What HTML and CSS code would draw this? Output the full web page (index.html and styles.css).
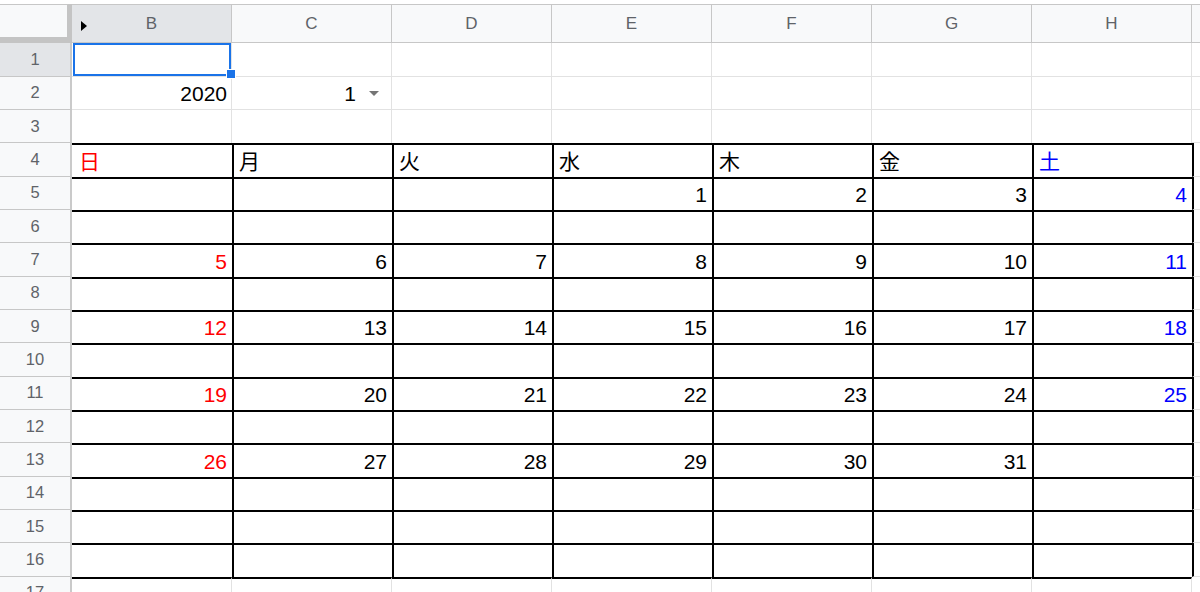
FILE: index.html
```html
<!DOCTYPE html>
<html lang="ja">
<head>
<meta charset="utf-8">
<title>Calendar</title>
<link rel="stylesheet" href="styles.css">
</head>
<body>
<div class="sheet">
  <!-- header -->
  <div class="corner"></div>
  <div class="ch on"><span class="tri"></span>B</div>
  <div class="ch">C</div>
  <div class="ch">D</div>
  <div class="ch">E</div>
  <div class="ch">F</div>
  <div class="ch">G</div>
  <div class="ch">H</div>
  <div class="ch"></div>

  <!-- row 1 -->
  <div class="rh on">1</div>
  <div class="c selcell"><span class="handle"></span></div>
  <div class="c"></div><div class="c"></div><div class="c"></div><div class="c"></div><div class="c"></div><div class="c"></div><div class="c"></div>

  <!-- row 2 -->
  <div class="rh">2</div>
  <div class="c r">2020</div>
  <div class="c r dd"><span>1</span><span class="arrow"></span></div>
  <div class="c"></div><div class="c"></div><div class="c"></div><div class="c"></div><div class="c"></div><div class="c"></div>

  <!-- row 3 -->
  <div class="rh">3</div>
  <div class="c e"></div><div class="c e"></div><div class="c e"></div><div class="c e"></div><div class="c e"></div><div class="c e"></div><div class="c e"></div>
  <div class="c"></div>

  <!-- row 4 -->
  <div class="rh">4</div>
  <div class="c k sun">日</div>
  <div class="c k kl">月</div>
  <div class="c k kl">火</div>
  <div class="c k kl">水</div>
  <div class="c k kl">木</div>
  <div class="c k kl">金</div>
  <div class="c k kl sat">土</div>
  <div class="c il"></div>

  <!-- row 5 -->
  <div class="rh">5</div>
  <div class="c k r"></div>
  <div class="c k kl r"></div>
  <div class="c k kl r"></div>
  <div class="c k kl r">1</div>
  <div class="c k kl r">2</div>
  <div class="c k kl r">3</div>
  <div class="c k kl r sat">4</div>
  <div class="c il"></div>

  <!-- row 6 -->
  <div class="rh">6</div>
  <div class="c k"></div><div class="c k kl"></div><div class="c k kl"></div><div class="c k kl"></div><div class="c k kl"></div><div class="c k kl"></div><div class="c k kl"></div>
  <div class="c il"></div>

  <!-- row 7 -->
  <div class="rh">7</div>
  <div class="c k r sun">5</div>
  <div class="c k kl r">6</div>
  <div class="c k kl r">7</div>
  <div class="c k kl r">8</div>
  <div class="c k kl r">9</div>
  <div class="c k kl r">10</div>
  <div class="c k kl r sat">11</div>
  <div class="c il"></div>

  <!-- row 8 -->
  <div class="rh">8</div>
  <div class="c k"></div><div class="c k kl"></div><div class="c k kl"></div><div class="c k kl"></div><div class="c k kl"></div><div class="c k kl"></div><div class="c k kl"></div>
  <div class="c il"></div>

  <!-- row 9 -->
  <div class="rh">9</div>
  <div class="c k r sun">12</div>
  <div class="c k kl r">13</div>
  <div class="c k kl r">14</div>
  <div class="c k kl r">15</div>
  <div class="c k kl r">16</div>
  <div class="c k kl r">17</div>
  <div class="c k kl r sat">18</div>
  <div class="c il"></div>

  <!-- row 10 -->
  <div class="rh">10</div>
  <div class="c k"></div><div class="c k kl"></div><div class="c k kl"></div><div class="c k kl"></div><div class="c k kl"></div><div class="c k kl"></div><div class="c k kl"></div>
  <div class="c il"></div>

  <!-- row 11 -->
  <div class="rh">11</div>
  <div class="c k r sun">19</div>
  <div class="c k kl r">20</div>
  <div class="c k kl r">21</div>
  <div class="c k kl r">22</div>
  <div class="c k kl r">23</div>
  <div class="c k kl r">24</div>
  <div class="c k kl r sat">25</div>
  <div class="c il"></div>

  <!-- row 12 -->
  <div class="rh">12</div>
  <div class="c k"></div><div class="c k kl"></div><div class="c k kl"></div><div class="c k kl"></div><div class="c k kl"></div><div class="c k kl"></div><div class="c k kl"></div>
  <div class="c il"></div>

  <!-- row 13 -->
  <div class="rh">13</div>
  <div class="c k r sun">26</div>
  <div class="c k kl r">27</div>
  <div class="c k kl r">28</div>
  <div class="c k kl r">29</div>
  <div class="c k kl r">30</div>
  <div class="c k kl r">31</div>
  <div class="c k kl r sat"></div>
  <div class="c il"></div>

  <!-- row 14 -->
  <div class="rh">14</div>
  <div class="c k"></div><div class="c k kl"></div><div class="c k kl"></div><div class="c k kl"></div><div class="c k kl"></div><div class="c k kl"></div><div class="c k kl"></div>
  <div class="c il"></div>

  <!-- row 15 -->
  <div class="rh">15</div>
  <div class="c k"></div><div class="c k kl"></div><div class="c k kl"></div><div class="c k kl"></div><div class="c k kl"></div><div class="c k kl"></div><div class="c k kl"></div>
  <div class="c il"></div>

  <!-- row 16 -->
  <div class="rh">16</div>
  <div class="c k"></div><div class="c k kl"></div><div class="c k kl"></div><div class="c k kl"></div><div class="c k kl"></div><div class="c k kl"></div><div class="c k kl"></div>
  <div class="c il"></div>

  <!-- row 17 -->
  <div class="rh">17</div>
  <div class="c bt"></div><div class="c bt"></div><div class="c bt"></div><div class="c bt"></div><div class="c bt"></div><div class="c bt"></div><div class="c bt"></div>
  <div class="c"></div>
</div>
</body>
</html>
```

FILE: styles.css
```css
* { box-sizing: border-box; }

html, body {
  margin: 0;
  height: 100%;
  overflow: hidden;
  background: #ffffff;
}

.sheet {
  display: grid;
  grid-template-columns: 72px repeat(7, 160px) 1fr;
  grid-template-rows: 39.333px repeat(17, 33.333px);
  padding-top: 4px;
  font-family: "Liberation Sans", "Noto Sans CJK JP", Arial, sans-serif;
  color: #000;
}

.corner {
  background: #f8f9fa;
  border-top: 1px solid #c7c7c7;
  border-right: 5px solid #c4c4c4;
  border-bottom: 6px solid #c4c4c4;
}

.ch {
  background: #f8f9fa;
  border-top: 1px solid #c7c7c7;
  border-right: 1px solid #c7c7c7;
  border-bottom: 1px solid #c7c7c7;
  display: flex;
  align-items: center;
  justify-content: center;
  font-size: 17px;
  color: #5f6368;
}

.ch.on {
  background: #e3e5e8;
  position: relative;
}

.tri {
  position: absolute;
  left: 9px;
  top: 16px;
  width: 0;
  height: 0;
  border-left: 6px solid #000;
  border-top: 5px solid transparent;
  border-bottom: 5px solid transparent;
}

.rh {
  background: #f8f9fa;
  border-right: 2px solid #cacaca;
  border-bottom: 1px solid #c7c7c7;
  display: flex;
  align-items: center;
  justify-content: center;
  font-size: 16.5px;
  color: #5f6368;
}

.rh.on { background: #e3e5e8; }

.c {
  border-right: 1px solid #e2e2e2;
  border-bottom: 1px solid #e2e2e2;
  display: flex;
  align-items: flex-end;
  padding: 0 4px 3px 7px;
  font-size: 21px;
  line-height: 24px;
  white-space: nowrap;
  min-width: 0;
}

.r { justify-content: flex-end; }

.e { border-bottom: 0; }

.k {
  border-top: 2px solid #000;
  border-right: 0;
  border-bottom: 0;
  padding-right: 5px;
}

.kl {
  border-left: 2px solid #000;
  padding-left: 5px;
}

.il { border-left: 2px solid #000; }

.bt { border-top: 2px solid #000; }

.sun { color: #ff0000; }
.sat { color: #0000ff; }

.dd { padding-right: 12px; }

.arrow {
  width: 0;
  height: 0;
  margin-left: 13px;
  margin-bottom: 10px;
  border-left: 5px solid transparent;
  border-right: 5px solid transparent;
  border-top: 5px solid #757575;
}

.selcell {
  position: relative;
  z-index: 2;
}

.selcell::after {
  content: "";
  position: absolute;
  top: 0;
  left: 1px;
  right: 0;
  bottom: 0;
  border: 2px solid #1a73e8;
}

.handle {
  position: absolute;
  right: -5px;
  bottom: -3px;
  width: 10px;
  height: 10px;
  background: #1a73e8;
  border: 1px solid #ffffff;
  z-index: 3;
}
```
